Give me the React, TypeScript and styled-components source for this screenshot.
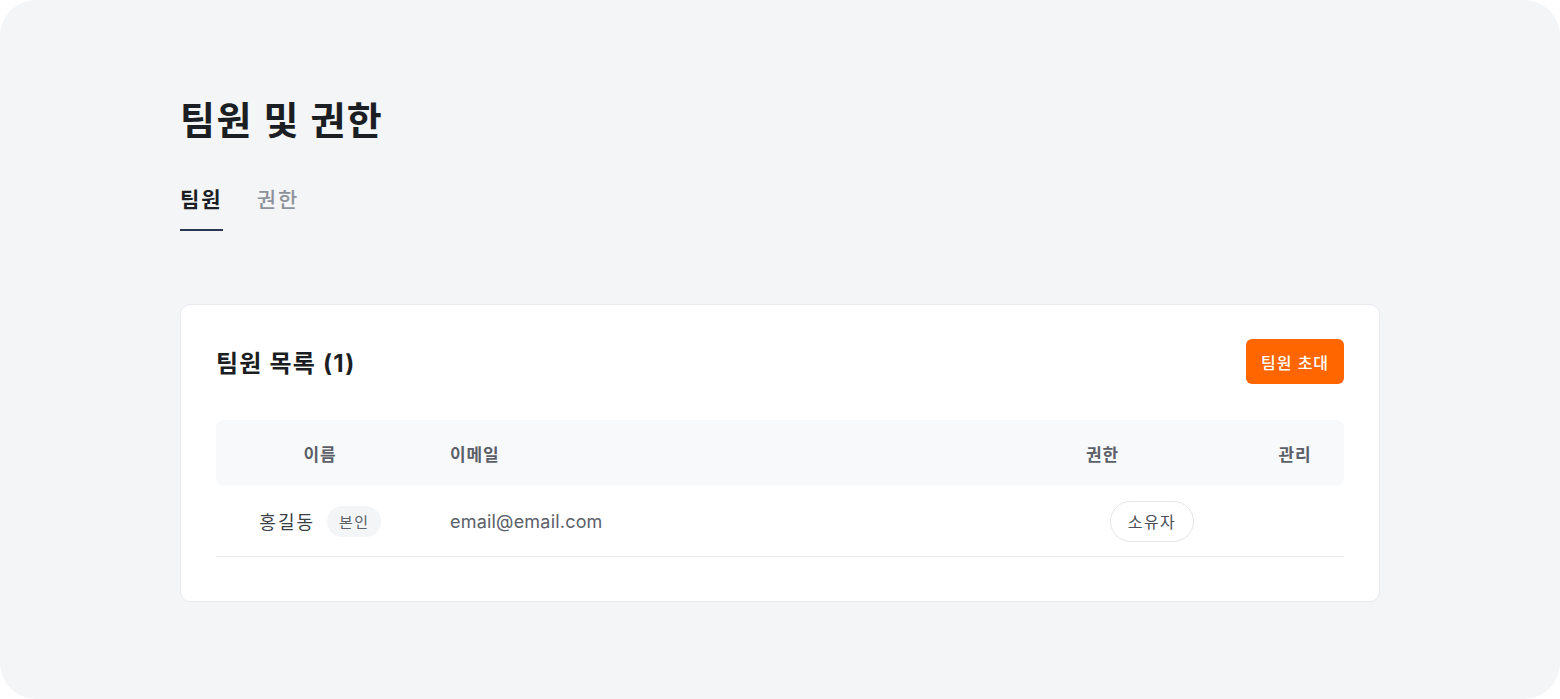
import styled, { createGlobalStyle } from 'styled-components';

const GlobalStyle = createGlobalStyle`
  html, body {
    margin: 0;
    padding: 0;
    background: #ffffff;
  }
  body {
    font-family: Inter, "Noto Sans CJK KR", "Noto Sans", sans-serif;
    -webkit-font-smoothing: antialiased;
  }
`;

const Page = styled.div`
  box-sizing: border-box;
  height: 699px;
  background: #f4f5f7;
  border-radius: 36px;
  padding: 96px 180px 0;
  overflow: hidden;
`;

const Title = styled.h1`
  margin: 0;
  font-size: 38px;
  line-height: 48px;
  font-weight: 700;
  color: #1b1e23;
  letter-spacing: 1.5px;
`;

const Tabs = styled.div`
  display: flex;
  gap: 34px;
  margin-top: 42px;
`;

const Tab = styled.div<{ $active?: boolean }>`
  font-size: 21px;
  line-height: 28px;
  letter-spacing: 2px;
  padding-bottom: 15px;
  font-weight: ${(p) => (p.$active ? 700 : 500)};
  color: ${(p) => (p.$active ? '#1b1e23' : '#8d929a')};
  border-bottom: 2px solid ${(p) => (p.$active ? '#2a3752' : 'transparent')};
`;

const Card = styled.section`
  margin-top: 73px;
  width: 1200px;
  box-sizing: border-box;
  background: #ffffff;
  border: 1px solid #e8eaee;
  border-radius: 10px;
  padding: 34px 35px 44px;
`;

const CardHeader = styled.div`
  display: flex;
  align-items: center;
  justify-content: space-between;
  height: 45px;
`;

const CardTitle = styled.h2`
  margin: 0;
  font-size: 24px;
  letter-spacing: 1.2px;
  font-weight: 700;
  color: #1b1e23;
`;

const InviteButton = styled.button`
  height: 45px;
  width: 98px;
  border: none;
  border-radius: 6px;
  background: #ff6600;
  color: #ffffff;
  font-family: inherit;
  font-size: 16px;
  letter-spacing: 1px;
  font-weight: 500;
  cursor: pointer;
`;

const Table = styled.div`
  margin-top: 36px;
`;

const columns = '208px 616px 206px 98px';

const HeadRow = styled.div`
  display: grid;
  grid-template-columns: ${columns};
  align-items: center;
  height: 66px;
  background: #f8f9fb;
  border-radius: 8px;
`;

const HeadCell = styled.div<{ $align?: string; $pad?: number }>`
  font-size: 17px;
  letter-spacing: 0.8px;
  font-weight: 600;
  color: #5b6068;
  text-align: ${(p) => p.$align || 'left'};
  padding-left: ${(p) => p.$pad || 0}px;
`;

const BodyRow = styled.div`
  display: grid;
  grid-template-columns: ${columns};
  align-items: center;
  height: 70px;
  border-bottom: 1px solid #e8eaee;
`;

const NameCell = styled.div`
  display: flex;
  align-items: center;
  justify-content: center;
  gap: 12px;
  font-size: 18px;
  letter-spacing: 2px;
  color: #3a3f46;
`;

const SelfBadge = styled.span`
  display: inline-flex;
  align-items: center;
  height: 31px;
  padding: 0 11px 0 12px;
  border-radius: 16px;
  background: #f4f5f7;
  font-size: 15px;
  letter-spacing: 1.5px;
  color: #5b6068;
`;

const EmailCell = styled.div`
  padding-left: 26px;
  font-size: 18px;
  letter-spacing: 0.2px;
  color: #5b6068;
`;

const RoleCell = styled.div`
  padding-left: 70px;
`;

const RoleBadge = styled.span`
  display: inline-flex;
  align-items: center;
  justify-content: center;
  box-sizing: border-box;
  width: 84px;
  height: 41px;
  border: 1px solid #e3e5e9;
  border-radius: 21px;
  background: #ffffff;
  font-size: 16px;
  letter-spacing: 1.5px;
  color: #4a4f57;
`;

type Member = {
  name: string;
  email: string;
  role: string;
  self?: boolean;
};

const members: Member[] = [{ name: '홍길동', email: 'email@email.com', role: '소유자', self: true }];

export default function App() {
  return (
    <>
      <GlobalStyle />
      <Page>
        <Title>팀원 및 권한</Title>
        <Tabs>
          <Tab $active>팀원</Tab>
          <Tab>권한</Tab>
        </Tabs>
        <Card>
          <CardHeader>
            <CardTitle>팀원 목록 ({members.length})</CardTitle>
            <InviteButton>팀원 초대</InviteButton>
          </CardHeader>
          <Table>
            <HeadRow>
              <HeadCell $align="center">이름</HeadCell>
              <HeadCell $pad={26}>이메일</HeadCell>
              <HeadCell $pad={46}>권한</HeadCell>
              <HeadCell $align="center">관리</HeadCell>
            </HeadRow>
            {members.map((m) => (
              <BodyRow key={m.email}>
                <NameCell>
                  {m.name}
                  {m.self && <SelfBadge>본인</SelfBadge>}
                </NameCell>
                <EmailCell>{m.email}</EmailCell>
                <RoleCell>
                  <RoleBadge>{m.role}</RoleBadge>
                </RoleCell>
                <div />
              </BodyRow>
            ))}
          </Table>
        </Card>
      </Page>
    </>
  );
}
